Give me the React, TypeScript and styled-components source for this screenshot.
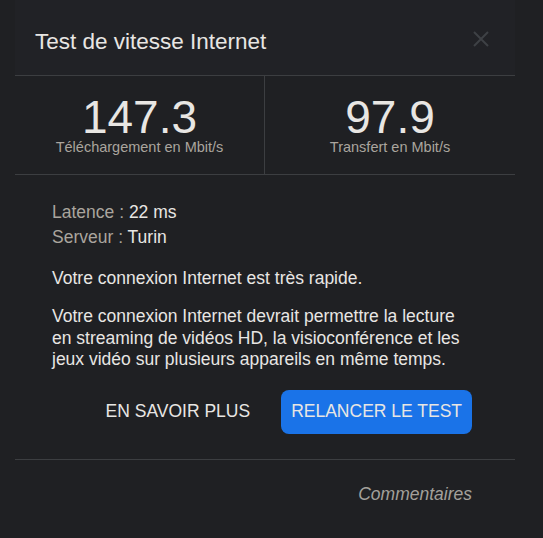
import React from 'react';
import styled, { createGlobalStyle } from 'styled-components';

const GlobalStyle = createGlobalStyle`
  html, body {
    margin: 0;
    padding: 0;
    background: #1f2023;
  }
  body {
    font-family: "Liberation Sans", Arial, sans-serif;
    color: #e8e6e3;
  }
`;

const Panel = styled.div`
  width: 500px;
  margin-left: 15px;
  display: flex;
  flex-direction: column;
`;

const Header = styled.div`
  height: 76px;
  box-sizing: border-box;
  background: #212226;
  border-bottom: 1px solid #3c3e41;
  display: flex;
  align-items: flex-start;
  justify-content: space-between;
  padding: 29px 26px 0 20px;
  h2 {
    margin: 0;
    font-size: 22.5px;
    line-height: 26px;
    font-weight: 400;
    color: #e8e6e3;
  }
`;

const CloseBtn = styled.button`
  background: none;
  border: none;
  padding: 0;
  margin-top: 2px;
  width: 16px;
  height: 16px;
  display: flex;
  cursor: pointer;
`;

const Stats = styled.div`
  display: grid;
  grid-template-columns: 250px 1fr;
  border-bottom: 1px solid #3c3e41;
  height: 99px;
  box-sizing: border-box;
`;

const Stat = styled.div<{ divider?: boolean }>`
  display: flex;
  flex-direction: column;
  align-items: center;
  padding-top: 19px;
  border-right: ${({ divider }) => (divider ? '1px solid #3c3e41' : 'none')};
`;

const StatValue = styled.div`
  font-size: 46px;
  line-height: 44px;
  color: #e8e6e3;
`;

const StatLabel = styled.div`
  font-size: 14.5px;
  line-height: 16px;
  color: #aaa59e;
`;

const Body = styled.div`
  padding: 25px 43px 0 37px;
  font-size: 17.5px;
`;

const InfoLine = styled.div`
  line-height: 25px;
  color: #e8e6e3;
  span {
    color: #aaa59e;
  }
`;

const Paragraph = styled.p<{ gap: number }>`
  margin: ${({ gap }) => gap}px 0 0;
  line-height: 21.5px;
  color: #e8e6e3;
`;

const Actions = styled.div`
  display: flex;
  justify-content: flex-end;
  align-items: center;
  gap: 31px;
  margin-top: 19px;
  padding-bottom: 25px;
`;

const TextButton = styled.button`
  background: none;
  border: none;
  font-family: "Liberation Sans", Arial, sans-serif;
  font-size: 17.5px;
  color: #e8e6e3;
  padding: 0;
  cursor: pointer;
`;

const PrimaryButton = styled.button`
  background: #1a73e8;
  border: none;
  border-radius: 8px;
  height: 44px;
  padding: 0 10px;
  font-family: "Liberation Sans", Arial, sans-serif;
  font-size: 17.5px;
  color: #e8e6e3;
  cursor: pointer;
`;

const Footer = styled.div`
  display: flex;
  justify-content: flex-end;
  border-top: 1px solid #3c3e41;
  padding: 24px 43px 0 0;
  a {
    font-size: 17.5px;
    line-height: 20px;
    font-style: italic;
    color: #a3a09b;
    cursor: pointer;
  }
`;

const App = () => {
  return (
    <>
      <GlobalStyle />
      <Panel>
        <Header>
          <h2>Test de vitesse Internet</h2>
          <CloseBtn aria-label="Fermer">
            <svg width="16" height="16" viewBox="0 0 16 16">
              <path d="M1 1L15 15M15 1L1 15" stroke="#3e4145" strokeWidth="2" />
            </svg>
          </CloseBtn>
        </Header>
        <Stats>
          <Stat divider>
            <StatValue>147.3</StatValue>
            <StatLabel>Téléchargement en Mbit/s</StatLabel>
          </Stat>
          <Stat>
            <StatValue>97.9</StatValue>
            <StatLabel>Transfert en Mbit/s</StatLabel>
          </Stat>
        </Stats>
        <Body>
          <InfoLine>
            <span>Latence : </span>22 ms
          </InfoLine>
          <InfoLine>
            <span>Serveur : </span>Turin
          </InfoLine>
          <Paragraph gap={18}>Votre connexion Internet est très rapide.</Paragraph>
          <Paragraph gap={16.5}>
            Votre connexion Internet devrait permettre la lecture en streaming de vidéos HD, la
            visioconférence et les jeux vidéo sur plusieurs appareils en même temps.
          </Paragraph>
          <Actions>
            <TextButton>EN SAVOIR PLUS</TextButton>
            <PrimaryButton>RELANCER LE TEST</PrimaryButton>
          </Actions>
        </Body>
        <Footer>
          <a>Commentaires</a>
        </Footer>
      </Panel>
    </>
  );
};

export default App;
